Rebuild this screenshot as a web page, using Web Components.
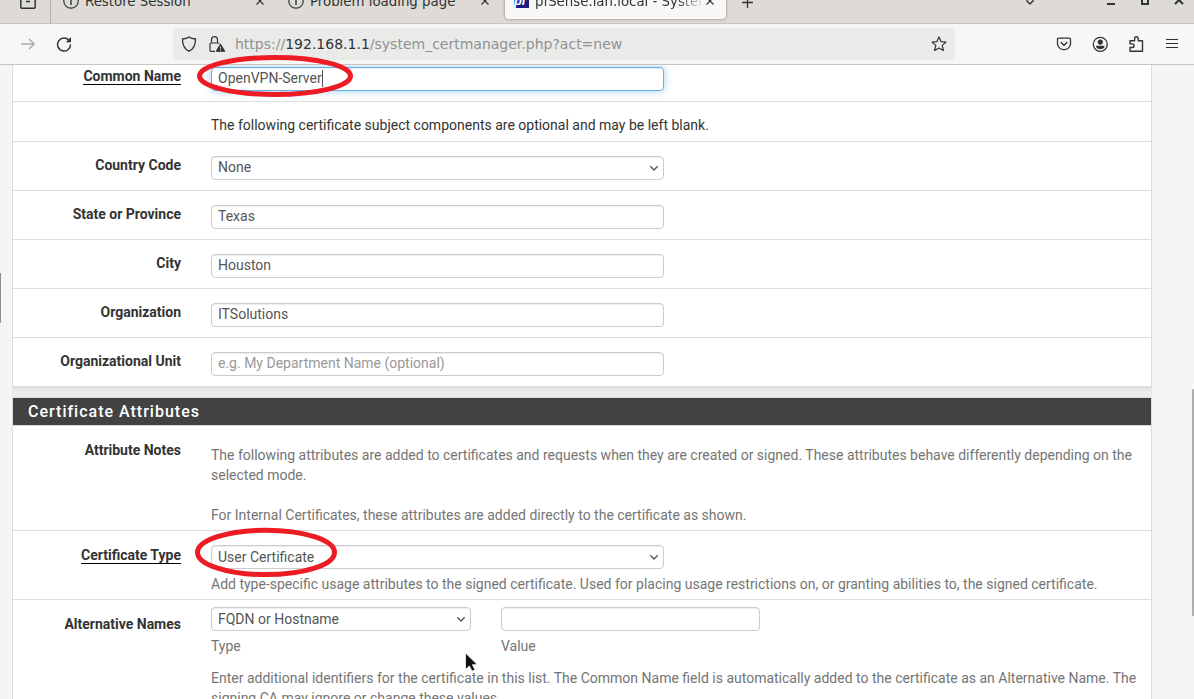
<!DOCTYPE html>
<html lang="en">
<head>
<meta charset="utf-8">
<title>pfSense.lan.local - System: Certificate Manager</title>
<style>
html,body{margin:0;height:100%;overflow:hidden;background:#f5f5f5}
</style>
</head>
<body>
<browser-window></browser-window>
<script>
const define = (name, html) => {
  const t = document.createElement('template');
  t.innerHTML = html;
  customElements.define(name, class extends HTMLElement {
    constructor() {
      super();
      this.attachShadow({mode: 'open'}).append(t.content.cloneNode(true));
    }
  });
};

/* ---------- icons ---------- */
const ICONS = {
  tabs: [16, '<path d="M.8 1v12.200q0 1 1 1h12.400q1 0 1-1V1" stroke-width="1.5"/><path d="M6 7.5h4" stroke-width="1.5"/>'],
  info: [16, '<circle cx="8" cy="8" r="7.2" stroke-width="1.2"/><path d="M8 7v5M8 4v1.5" stroke-width="1.4"/>'],
  close: [10, '<path d="M1.5 1.5l7 7M8.500 1.500l-7 7" stroke-width="1.200"/>'],
  plus: [14, '<path d="M7.500 2v11M2 7.500h11" stroke-width="1.3"/>'],
  down: [10, '<path d="M1.300 3.200l3.700 3.700 3.700-3.700" stroke-width="1.4"/>'],
  forward: [16, '<path d="M1 8h13M9 3l5.200 5-5.200 5" stroke-width="1.3"/>'],
  reload: [16, '<path d="M12.9 4.300A6.500 6.500 0 1 0 14.500 8.500" stroke-width="1.5"/><path d="M15 1v5.200H9.800z" fill="currentColor" stroke="none"/>'],
  shield: [16, '<path d="M8 .9C6 2.400 4 2.700 1.500 3C1.400 9 3 13 8 15.200C13 13 14.600 9 14.500 3C12 2.700 10 2.400 8 .9z" stroke-width="1.3"/>'],
  lock: [18, '<path d="M7 16.300H3Q2 16.300 2 15.300V9Q2 8 3 8H10Q11 8 11 9M3.500 8V4.700a3 3 0 0 1 6 0V8" stroke-width="1.200"/><path d="M12.500 9.500l4 6.700H8.500z" fill="currentColor" stroke-width="1.300" stroke-linejoin="round"/><path d="M12.500 11.500v2.300M12.500 14.600v1" stroke="#eaeae9" stroke-width=".9"/>'],
  star: [16, '<path d="M8 1l2 4.600 5 .5-3.800 3.300 1.200 5L8 11.900 3.600 14.400l1.200-5L1 6.100l5-.5z" stroke-width="1.200" stroke-linejoin="round"/>'],
  pocket: [16, '<path d="M2.700 2.200h10.600q1.200 0 1.200 1.200v4a6.500 6.300 0 0 1-13 0v-4q0-1.200 1.200-1.200z" stroke-width="1.300"/><path d="M4.800 6.200L8 9.300l3.200-3.100" stroke-width="1.400"/>'],
  account: [16, '<circle cx="8.300" cy="8.300" r="7" stroke-width="1.300"/><circle cx="8.300" cy="6.100" r="2.600" fill="currentColor" stroke="none"/><path d="M4 9.800h8.600q0 3.200-4.300 3.400Q4 13 4 9.800z" fill="currentColor" stroke="none"/>'],
  puzzle: [16, '<path d="M2 15.300V11.500h2.300a1.800 1.800 0 0 0 0-3.600H2V4.700h4.600V2.500a1.800 1.800 0 0 1 3.600 0v2.200H14.500V15.300z" stroke-width="1.400" stroke-linejoin="round"/>'],
  menu: [14, '<path d="M1 2.500h12M1 6.500h12M1 10.500h12" stroke-width="1.200"/>'],
  min: [10, '<path d="M1 9h8" stroke-width="2"/>'],
  max: [10, '<path d="M2 1h6v8H2z" stroke-width="2"/>'],
  shut: [10, '<path d="M1 1l8 8M9 1L1 9" stroke-width="2"/>']
};
customElements.define('ui-icon', class extends HTMLElement {
  constructor() {
    super();
    const [size, body] = ICONS[this.getAttribute('name')] || [16, ''];
    this.attachShadow({mode: 'open'}).innerHTML =
      `<style>:host{display:block;flex:none;width:${size}px;height:${size}px}svg{display:block;overflow:visible}</style>
       <svg width="${size}" height="${size}" viewBox="0 0 ${size} ${size}" fill="none" stroke="currentColor">${body}</svg>`;
  }
});

/* ---------- browser chrome ---------- */
define('browser-tab', `<style>
:host{display:flex;align-items:center;box-sizing:border-box;height:36px;width:225px;padding-left:12px;margin-bottom:4px;border-radius:4px;font:13.33px/18px "DejaVu Sans",sans-serif;color:#2e3436}
:host([active]){width:221px;margin-left:4px;padding-left:9px;background:#f7f7f6;box-shadow:0 0 3px rgba(0,0,0,.45)}
.t{flex:1;white-space:nowrap;overflow:hidden;margin-left:6px;padding-top:2px}
:host([active]) .t{-webkit-mask-image:linear-gradient(90deg,#000 calc(100% - 28px),transparent);mask-image:linear-gradient(90deg,#000 calc(100% - 28px),transparent)}
ui-icon[name=close]{margin-right:11px}
</style><slot name="icon"></slot><span class="t"><slot></slot></span><ui-icon name="close"></ui-icon>`);

define('pf-logo', `<style>
:host{display:block;flex:none;width:15px;height:14px;overflow:hidden;background:linear-gradient(120deg,#3a7bea 0 25%,#1d1a80 45%);color:#fff;font:italic bold 13px/14px "Liberation Sans",sans-serif;letter-spacing:-.5px}
</style>pf`);

define('tab-strip', `<style>
:host{display:flex;align-items:flex-end;height:23px;background:#dedad5;border-bottom:1px solid #c9c4bd;color:#2e3436;overflow:hidden}
.first{display:flex;align-items:flex-end;width:50px;height:23px;border-right:1px solid #b4b0aa;box-sizing:content-box}
.first ui-icon{margin:0 0 13px 20px}
.new{margin:0 0 14px 14px}
.sp{flex:1}
.list{margin:0 47px 16px 0}
.w{margin:0 0 18px 24px}
.w:last-child{margin-right:10px}
</style>
<div class="first"><ui-icon name="tabs"></ui-icon></div>
<browser-tab><ui-icon slot="icon" name="info"></ui-icon>Restore Session</browser-tab>
<browser-tab><ui-icon slot="icon" name="info"></ui-icon>Problem loading page</browser-tab>
<browser-tab active><pf-logo slot="icon"></pf-logo>pfSense.lan.local - System</browser-tab>
<ui-icon class="new" name="plus"></ui-icon><div class="sp"></div>
<ui-icon class="list" name="down"></ui-icon>
<ui-icon class="w" name="min"></ui-icon><ui-icon class="w" name="max"></ui-icon><ui-icon class="w" name="shut"></ui-icon>`);

define('nav-bar', `<style>
:host{display:flex;align-items:center;height:40px;background:#f7f7f6;border-bottom:1px solid #c9c4bd;color:#2e3436}
.fwd{margin-left:20px;color:#a9abab}
.rel{margin-left:20px}
.url{display:flex;align-items:center;box-sizing:border-box;width:782px;height:32px;margin-left:101px;padding:0 8px;border-radius:4px;background:#eaeae9}
.url ui-icon[name=lock]{margin-left:11px}
.addr{flex:1;margin-left:9px;font:14px/20px "DejaVu Sans",sans-serif;color:#909292;white-space:nowrap}
.addr b{font-weight:400;color:#2e3436}
.tools{display:flex;align-items:center;gap:20px;margin-left:101px}
.tools ui-icon[name=menu]{margin-left:1px}
</style>
<ui-icon class="fwd" name="forward"></ui-icon><ui-icon class="rel" name="reload"></ui-icon>
<div class="url"><ui-icon name="shield"></ui-icon><ui-icon name="lock"></ui-icon><span class="addr">https://<b>192.168.1.1</b>/system_certmanager.php?act=new</span><ui-icon name="star"></ui-icon></div>
<div class="tools"><ui-icon name="pocket"></ui-icon><ui-icon name="account"></ui-icon><ui-icon name="puzzle"></ui-icon><ui-icon name="menu"></ui-icon></div>`);

/* ---------- form ---------- */
define('form-row', `<style>
:host{display:flex;box-sizing:border-box;height:var(--h,49px);border-bottom:1px solid #dcdcdc;font:14px/20px Roboto,sans-serif}
:host(.last){border-bottom:0}
.l{box-sizing:border-box;width:168px;padding-top:var(--lp,13px);text-align:right;font-weight:700;color:#333;white-space:nowrap}
.f{width:928px;margin-left:30px;padding-top:var(--fp,14px)}
::slotted([slot=label]){display:inline-block;height:18px;}
::slotted([slot=label].req){border-bottom:1px solid #000}
</style><div class="l"><slot name="label"></slot></div><div class="f"><slot></slot></div>`);

define('text-field', `<style>
:host{display:flex;align-items:center;justify-content:space-between;box-sizing:border-box;width:453px;height:24px;padding:0 4px var(--pb,2px) 6px;border:1px solid #ccc;border-radius:4px;box-shadow:inset 0 1px 1px rgba(0,0,0,.075);background:#fff;color:#555}
:host([focus]){border-color:#66afe9;box-shadow:inset 0 1px 1px rgba(0,0,0,.075),0 0 8px rgba(102,175,233,.6)}
:host([hint]){color:#999}
.v{display:flex;align-items:center}
.c{display:none;width:1px;height:17px;background:#555}
:host([focus]) .c{display:block}
ui-icon{display:none;margin-bottom:calc(-1*var(--pb,2px))}
:host([select]) ui-icon{display:block}
</style><span class="v"><slot></slot><i class="c"></i></span><ui-icon name="down"></ui-icon>`);

define('form-panel', `<style>
:host{display:block;box-sizing:border-box;width:1140px;margin-left:12px;border:1px solid #dcdcdc;background:#fff}
:host(.top){border-top:0;height:322px}
header{height:27px;border-bottom:1px solid #dcdcdc;background:#424242;color:#fff;font:500 16px/27px Roboto,sans-serif;letter-spacing:1px;padding-left:15px}
:host(.top) header{display:none}
</style><header><slot name="title"></slot></header><slot></slot>`);

define('cert-form', `<style>
:host{display:block;height:634px;overflow:hidden;background:#f5f5f5;font:14px/20px Roboto,sans-serif;color:#333}
.gap{width:1140px;height:10px;margin-left:12px;background:linear-gradient(#dfdfdf,#ececec 50%,#f0f0f0)}
.help{color:#757575}
.pair{display:flex;gap:30px}
.pair .help{margin-top:5px}
p{margin:0;white-space:nowrap}
</style>
<form-panel class="top">
<form-row style="--h:37px;--lp:1px;--fp:2px"><span slot="label" class="req">Common Name</span><text-field focus>OpenVPN-Server</text-field></form-row>
<form-row style="--h:40px;--fp:13px">The following certificate subject components are optional and may be left blank.</form-row>
<form-row><span slot="label">Country Code</span><text-field select>None</text-field></form-row>
<form-row><span slot="label">State or Province</span><text-field>Texas</text-field></form-row>
<form-row><span slot="label">City</span><text-field>Houston</text-field></form-row>
<form-row><span slot="label">Organization</span><text-field>ITSolutions</text-field></form-row>
<form-row class="last"><span slot="label">Organizational Unit</span><text-field hint>e.g. My Department Name (optional)</text-field></form-row>
</form-panel>
<div class="gap"></div>
<form-panel><span slot="title">Certificate Attributes</span>
<form-row style="--h:105px;--lp:14px;--fp:19px"><span slot="label">Attribute Notes</span><div class="help"><p>The following attributes are added to certificates and requests when they are created or signed. These attributes behave differently depending on the</p><p>selected mode.</p><br><p>For Internal Certificates, these attributes are added directly to the certificate as shown.</p></div></form-row>
<form-row style="--h:69px;--lp:14px"><span slot="label" class="req">Certificate Type</span><text-field select style="--pb:0px">User Certificate</text-field><p class="help" style="margin-top:5px">Add type-specific usage attributes to the signed certificate. Used for placing usage restrictions on, or granting abilities to, the signed certificate.</p></form-row>
<form-row style="--h:140px;--lp:14px;--fp:7px"><span slot="label">Alternative Names</span><div class="pair"><div><text-field select style="width:260px;--pb:0px">FQDN or Hostname</text-field><p class="help">Type</p></div><div><text-field style="width:259px"></text-field><p class="help">Value</p></div></div><div class="help" style="margin-top:12px"><p>Enter additional identifiers for the certificate in this list. The Common Name field is automatically added to the certificate as an Alternative Name. The</p><p>signing CA may ignore or change these values.</p></div></form-row>
</form-panel>`);

/* ---------- marks drawn over the page ---------- */
define('mark-layer', `<style>
:host{position:absolute;inset:0;pointer-events:none}
svg{display:block}
</style><svg width="1194" height="699" viewBox="0 0 1194 699">
<rect x="0" y="273" width="1" height="50" fill="#8c8c8c"/>
<rect x="1192" y="389" width="6" height="227" rx="1.500" fill="#aeaeae"/>
<g fill="none" stroke="#ed1c24" stroke-width="5"><ellipse cx="275" cy="76" rx="75.500" ry="18.500"/><ellipse cx="266" cy="552.400" rx="68.500" ry="22.200"/></g>
<path d="M465.500 653v16.500l3.900-3.500 2.600 5.200 3-1.500-2.600-5h5z" fill="#111" stroke="#fff" stroke-width=".8"/>
</svg>`);

define('browser-window', `<style>
:host{display:block;position:relative;width:1194px;height:699px;overflow:hidden}
</style><tab-strip></tab-strip><nav-bar></nav-bar><cert-form></cert-form><mark-layer></mark-layer>`);
</script>
</body>
</html>
